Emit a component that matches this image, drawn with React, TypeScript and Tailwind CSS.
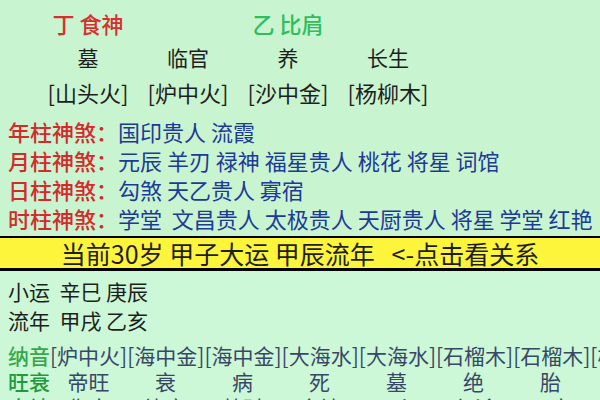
import React from 'react';

const cols = ['墓', '临官', '养', '长生'];
const nayin = ['[山头火]', '[炉中火]', '[沙中金]', '[杨柳木]'];

const shensha = [
  { label: '年柱神煞：', text: '国印贵人 流霞' },
  { label: '月柱神煞：', text: '元辰 羊刃 禄神 福星贵人 桃花 将星 词馆' },
  { label: '日柱神煞：', text: '勾煞 天乙贵人 寡宿' },
  { label: '时柱神煞：', text: '学堂  文昌贵人 太极贵人 天厨贵人 将星 学堂 红艳' },
];

const wangshuai = ['帝旺', '衰', '病', '死', '墓', '绝', '胎'];
const shishen = ['伤官', '比肩', '劫财', '食神', '正印', '七杀', '正官'];

const App: React.FC = () => {
  return (
    <div
      className="w-[600px] h-[400px] overflow-hidden bg-[#c9f4d0] text-[22px] leading-none text-[#1e1e1e]"
      style={{ fontFamily: '"Noto Sans CJK SC", "Noto Sans", sans-serif' }}
    >
      <div className="pt-[5px]">
        <div className="flex h-[35px] items-center pl-[38px]">
          <div className="w-[100px] text-center font-medium text-[#d63030]">丁 食神</div>
          <div className="w-[100px]" />
          <div className="w-[100px] text-center font-medium text-[#2fbe5e]">乙 比肩</div>
        </div>
        <div className="flex h-[34px] items-center pl-[38px] text-[21px]">
          {cols.map((c) => (
            <div key={c} className="w-[100px] text-center">{c}</div>
          ))}
        </div>
        <div className="flex h-[36px] items-center pl-[38px]">
          {nayin.map((c) => (
            <div key={c} className="w-[100px] text-center whitespace-nowrap">{c}</div>
          ))}
        </div>
        <div className="mt-[6px]">
          {shensha.map((s) => (
            <div key={s.label} className="flex h-[29px] items-center pl-[8px] whitespace-nowrap overflow-hidden">
              <span className="w-[110px] shrink-0 text-[#d42a2a] font-medium">{s.label}</span>
              <span className="text-[#1d3a98] whitespace-pre">{s.text}</span>
            </div>
          ))}
        </div>
      </div>
      <div className="mt-[4px] h-[35px] bg-[#fdf43c] border-t-2 border-b-[3px] border-black flex items-center justify-center text-[25px] whitespace-pre">
        当前30岁 甲子大运 甲辰流年   {'<-'}点击看关系
      </div>
      <div className="bg-[#ccf8d8] pt-[6px] pb-[20px] text-[21px]">
        <div className="flex h-[29px] items-center pl-[8px] whitespace-pre">小运  辛巳 庚辰</div>
        <div className="flex h-[29px] items-center pl-[8px] whitespace-pre">流年  甲戌 乙亥</div>
        <div className="mt-[6px] flex h-[28px] items-center pl-[8px] whitespace-nowrap overflow-hidden">
          <span className="w-[42px] shrink-0 text-[#36a84a] font-medium">纳音</span>
          <span className="text-[#394766]">[炉中火][海中金][海中金][大海水][大海水][石榴木][石榴木][杨柳木]</span>
        </div>
        <div className="flex h-[25px] items-center pl-[8px] whitespace-nowrap overflow-hidden">
          <span className="w-[42px] shrink-0 text-[#1f9a40] font-medium">旺衰</span>
          {wangshuai.map((w, i) => (
            <span key={i} className="w-[77px] shrink-0 text-center text-[#394766]">{w}</span>
          ))}
        </div>
        <div className="flex h-[26px] items-center pl-[8px] whitespace-nowrap overflow-hidden">
          <span className="w-[42px] shrink-0 text-[#1f9a40] font-medium">十神</span>
          {shishen.map((w, i) => (
            <span key={i} className="w-[77px] shrink-0 text-center text-[#394766]">{w}</span>
          ))}
        </div>
      </div>
    </div>
  );
};

export default App;
